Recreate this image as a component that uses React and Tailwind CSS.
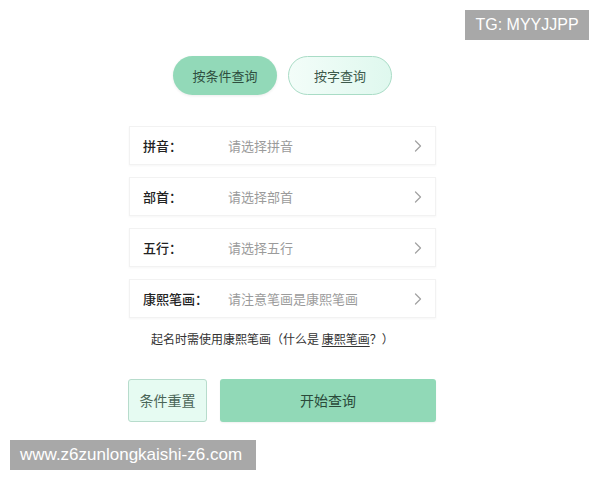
import React from "react";

const rows = [
  ["拼音：", "请选择拼音"],
  ["部首：", "请选择部首"],
  ["五行：", "请选择五行"],
  ["康熙笔画：", "请注意笔画是康熙笔画"],
];

function Chevron() {
  return (
    <svg width="8" height="12" viewBox="0 0 8 12" fill="none">
      <path d="M1.5 1l5 5-5 5" stroke="#a3a3a3" strokeWidth="1.3" strokeLinecap="round" strokeLinejoin="round" />
    </svg>
  );
}

export default function App() {
  return (
    <div className="relative w-[600px] h-[480px] bg-white overflow-hidden font-['Noto_Sans_CJK_SC','Noto_Sans',sans-serif]">
      <div className="absolute top-[10px] left-[465px] w-[124px] h-[30px] bg-[#a8a8a8] flex items-center justify-center text-white text-[16px] font-['Liberation_Sans',sans-serif]">
        TG: MYYJJPP
      </div>

      <div className="pl-[129px] pt-[56px] w-[436px]">
        <div className="flex justify-center gap-[11px]">
          <button className="w-[104px] h-[39px] rounded-full bg-[#92d9b8] text-[#2f4f3f] text-[13px] shadow-[0_1px_3px_rgba(0,0,0,0.08)]">
            按条件查询
          </button>
          <button className="w-[104px] h-[39px] rounded-full bg-gradient-to-r from-[#f3fdf9] to-[#dff8ee] border border-[#a9dcc6] text-[#3d5a4b] text-[13px]">
            按字查询
          </button>
        </div>

        <div className="mt-[31px] flex flex-col gap-[12px]">
          {rows.map(([label, hint]) => (
            <div key={label} className="h-[39px] flex items-center bg-white border border-[#f2f2f2] shadow-[0_1px_2px_rgba(0,0,0,0.04)] pl-[13px] pr-[13px]">
              <span className="w-[85px] text-[13px] text-[#222] font-medium">{label}</span>
              <span className="flex-1 text-[13px] text-[#9b9b9b]">{hint}</span>
              <Chevron />
            </div>
          ))}
        </div>

        <p className="mt-[12px] ml-[22px] text-[12px] text-[#333]">
          起名时需使用康熙笔画（什么是 <span className="underline underline-offset-2">康熙笔画</span>？）
        </p>

        <div className="mt-[31px] flex gap-[13px] -ml-px">
          <button className="w-[79px] h-[43px] rounded-[3px] bg-[#e6fbf2] border border-[#b7dccc] text-[14px] text-[#4a6558]">
            条件重置
          </button>
          <button className="w-[216px] h-[43px] rounded-[3px] bg-[#91d9b7] text-[14px] text-[#2a4a3a] shadow-[0_1px_2px_rgba(0,0,0,0.06)]">
            开始查询
          </button>
        </div>
      </div>

      <div className="absolute top-[440px] left-[10px] w-[246px] h-[30px] bg-[#a8a8a8] flex items-center pl-[10px] text-white text-[17px] font-['Liberation_Sans',sans-serif]">
        www.z6zunlongkaishi-z6.com
      </div>
    </div>
  );
}
